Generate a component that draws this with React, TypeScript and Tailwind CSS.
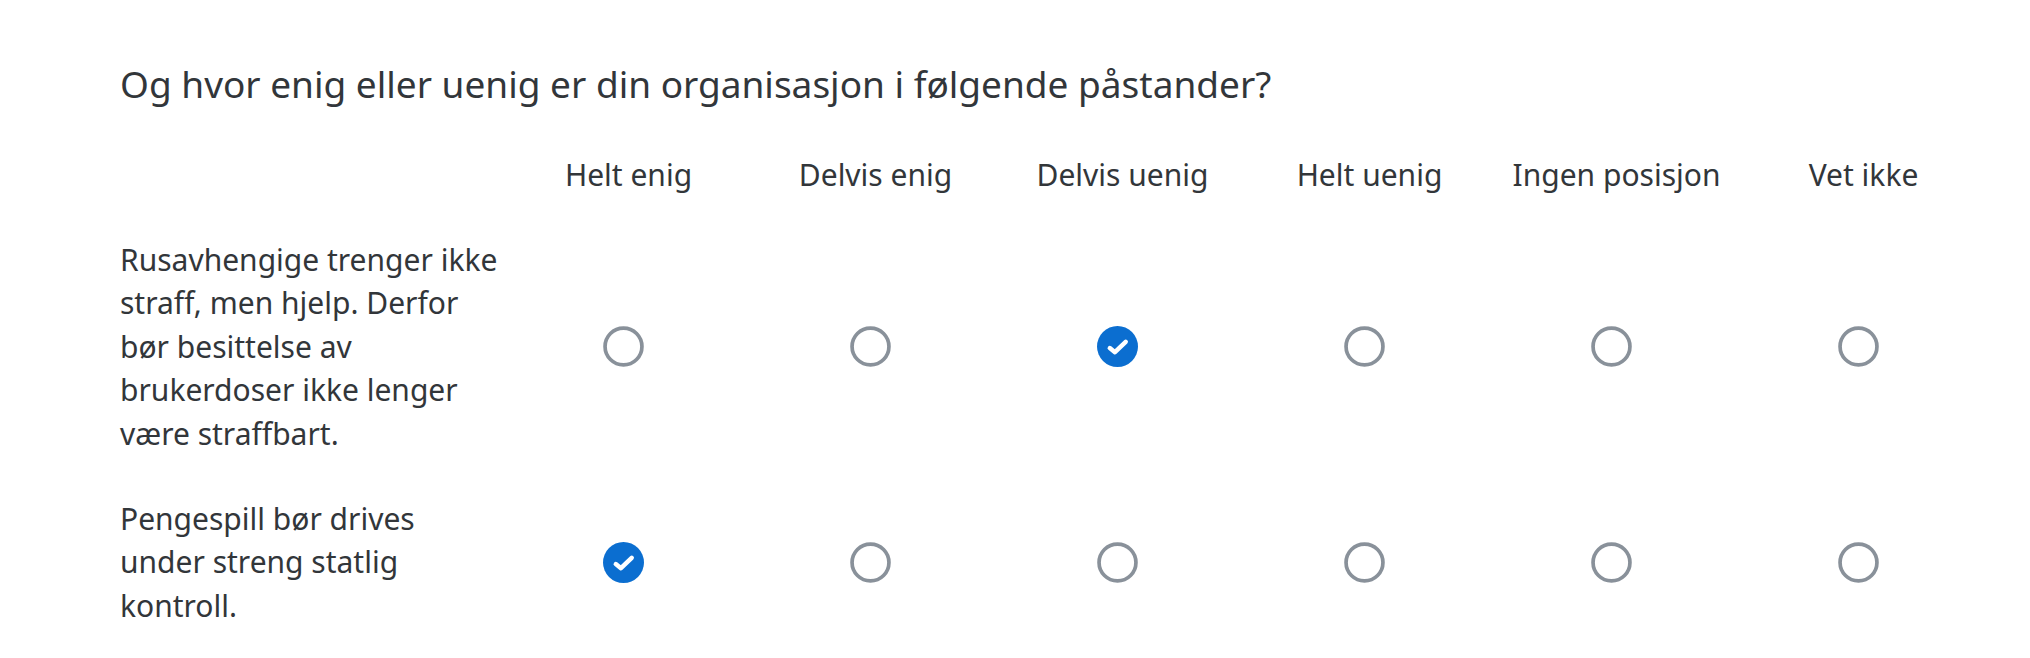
import React from "react";

const choices = ["Helt enig", "Delvis enig", "Delvis uenig", "Helt uenig", "Ingen posisjon", "Vet ikke"];

const statements: { lines: string[]; selected: number }[] = [
  {
    lines: ["Rusavhengige trenger ikke", "straff, men hjelp. Derfor", "bør besittelse av", "brukerdoser ikke lenger", "være straffbart."],
    selected: 2,
  },
  { lines: ["Pengespill bør drives", "under streng statlig", "kontroll."], selected: 0 },
];

function Radio({ checked }: { checked: boolean }) {
  if (checked) {
    return (
      <svg width="41" height="41" viewBox="0 0 40 40" aria-hidden="true">
        <circle cx="20" cy="20" r="20" fill="#0b6ed0" />
        <path d="M12.5 21.5 L17.5 25.5 L28 15.5" fill="none" stroke="#ffffff" strokeWidth="4.4" strokeLinecap="round" strokeLinejoin="round" />
      </svg>
    );
  }
  return (
    <svg width="41" height="41" viewBox="0 0 40 40" aria-hidden="true">
      <circle cx="20" cy="20" r="18" fill="#ffffff" stroke="#89919a" strokeWidth="3.6" />
    </svg>
  );
}

export default function App() {
  return (
    <div
      className="w-[2030px] h-[658px] bg-white text-[#32363a] pl-[120px] pr-[48px] pt-[60px]"
      style={{ fontFamily: '"Noto Sans", "Open Sans", sans-serif' }}
    >
      <h1 className="text-[37px] leading-[48px] font-normal">Og hvor enig eller uenig er din organisasjon i følgende påstander?</h1>
      <div className="grid grid-cols-[380px_repeat(6,247px)] mt-[24px]">
        <div />
        {choices.map((c) => (
          <div key={c} className="text-[30px] leading-[43px] py-[21px] pl-[10px] text-center whitespace-nowrap">
            {c}
          </div>
        ))}
        {statements.map((s, i) => (
          <React.Fragment key={i}>
            <div className="text-[30px] leading-[43.4px] py-[21px]">
              {s.lines.map((l) => (
                <span key={l} className="block whitespace-nowrap">
                  {l}
                </span>
              ))}
            </div>
            {choices.map((c, j) => (
              <div key={c} className="flex items-center justify-center">
                <Radio checked={j === s.selected} />
              </div>
            ))}
          </React.Fragment>
        ))}
      </div>
    </div>
  );
}
